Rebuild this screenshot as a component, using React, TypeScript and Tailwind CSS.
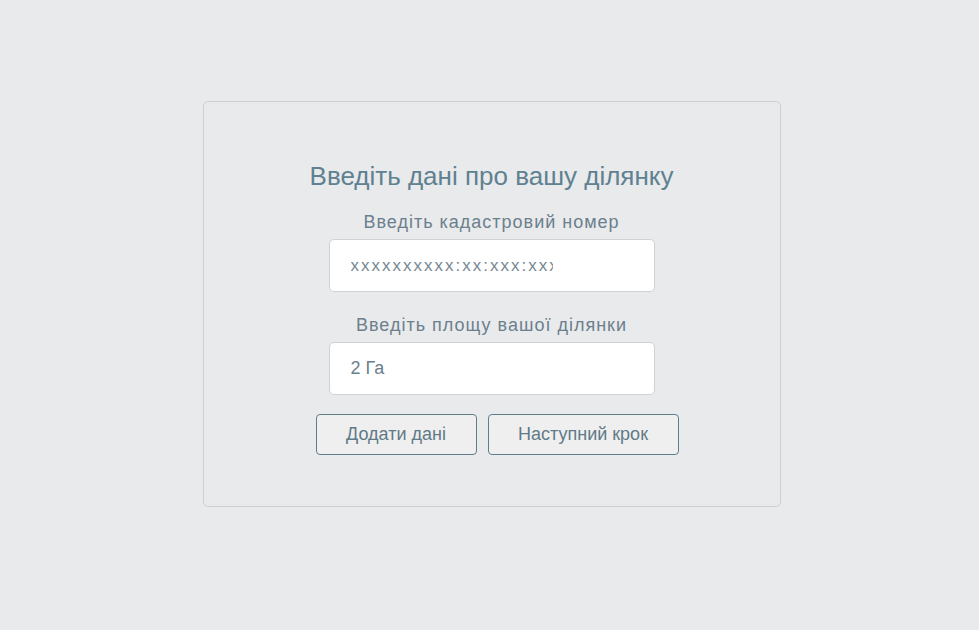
export default function App() {
  return (
    <div className="min-h-[630px] bg-[#e9eaec] pt-[101px] font-['Liberation_Sans',Arial,sans-serif]">
      <div className="mx-auto flex w-[578px] flex-col items-center rounded-[5px] border border-[#cdcfd1] pt-[59px] pb-[51px] translate-x-[2px]">
        <h1 className="text-[26px] leading-[30px] text-[#5f8190]">Введіть дані про вашу ділянку</h1>

        <label className="mt-[21px] text-[18px] leading-[21px] tracking-[1px] text-[#6b808c]">
          Введіть кадастровий номер
        </label>
        <div className="mt-[6px] flex h-[53px] w-[326px] items-center rounded-[5px] border border-[#cfd1d3] bg-white pl-[21px]">
          <span className="block w-[202px] overflow-hidden whitespace-nowrap text-[17px] tracking-[2px] text-[#778893]">
            xxxxxxxxxx:xx:xxx:xxxx
          </span>
        </div>

        <label className="mt-[23px] text-[18px] leading-[21px] tracking-[1px] text-[#6b808c]">
          Введіть площу вашої ділянки
        </label>
        <div className="mt-[6px] flex h-[53px] w-[326px] items-center rounded-[5px] border border-[#cfd1d3] bg-white pl-[21px]">
          <span className="text-[18px] text-[#6b808c]">2 Га</span>
        </div>

        <div className="mt-[19px] ml-[11px] flex gap-[11px]">
          <button className="h-[41px] w-[161px] rounded-[4px] border border-[#5f7d8b] bg-[#efefef] text-[18px] text-[#5f7a88]">
            Додати дані
          </button>
          <button className="h-[41px] w-[191px] rounded-[4px] border border-[#5f7d8b] bg-[#efefef] text-[18px] text-[#5f7a88]">
            Наступний крок
          </button>
        </div>
      </div>
    </div>
  )
}
